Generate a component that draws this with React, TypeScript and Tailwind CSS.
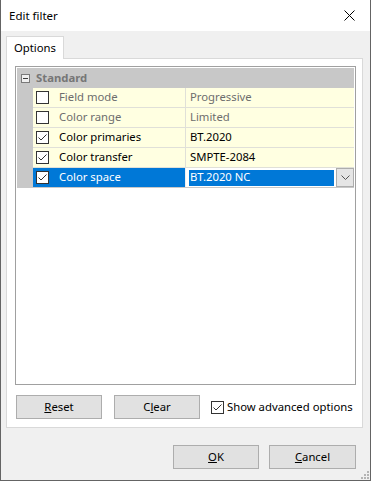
import React from "react";

const font = { fontFamily: '"Segoe UI", "Noto Sans", sans-serif' };

function Check({ checked }: { checked: boolean }) {
  return (
    <div className="w-[13px] h-[13px] border border-[#333333] bg-white flex items-center justify-center shrink-0">
      {checked && (
        <svg width="11" height="11" viewBox="0 0 11 11">
          <path d="M1.5 5.5 L4 8 L9.5 2.5" fill="none" stroke="#333333" strokeWidth="1" />
        </svg>
      )}
    </div>
  );
}

type Row = { name: string; value: string; checked: boolean; disabled?: boolean };

const rows: Row[] = [
  { name: "Field mode", value: "Progressive", checked: false, disabled: true },
  { name: "Color range", value: "Limited", checked: false, disabled: true },
  { name: "Color primaries", value: "BT.2020", checked: true },
  { name: "Color transfer", value: "SMPTE-2084", checked: true },
];

function Btn({ children, w }: { children: React.ReactNode; w: string }) {
  return (
    <div className={`${w} shrink-0 h-[24px] bg-[#e1e1e1] border border-[#adadad] flex items-center justify-center text-black`}>
      {children}
    </div>
  );
}

export default function App() {
  return (
    <div
      className="w-[371px] h-[481px] bg-[#f0f0f0] border-l border-r border-b border-[#646464] flex flex-col relative overflow-hidden text-[11.3px] text-black"
      style={font}
    >
      {/* title bar */}
      <div className="h-[31px] bg-white flex items-center justify-between pl-[8px] pr-[10px] shrink-0">
        <span className="text-[11.5px] text-black">Edit filter</span>
        <svg width="11" height="11" viewBox="0 0 11 11" className="mr-[5px]">
          <path d="M0.5 0.5 L10.5 10.5 M10.5 0.5 L0.5 10.5" stroke="#000" strokeWidth="1" />
        </svg>
      </div>

      {/* tabs */}
      <div className="pl-[5px] pr-[7px] pt-[5px] flex flex-col">
        <div className="flex">
          <div className="h-[23px] w-[58px] bg-white border border-b-0 border-[#d9d9d9] flex items-center pl-[7px] relative z-10 -mb-px">
            <span>Options</span>
          </div>
        </div>
        <div className="h-[370px] bg-white border border-[#d9d9d9] pt-[7px] pl-[8px] pr-[6px] pb-[8px] flex flex-col">
          {/* property grid */}
          <div className="h-[320px] border border-[#a0a0a0] p-px flex flex-col">
            <div className="h-[20px] bg-[#c8c8c8] flex items-center">
              <div className="w-[16px] flex items-center justify-center">
                <svg width="9" height="9" viewBox="0 0 9 9">
                  <rect x="0.5" y="0.5" width="8" height="8" fill="#f0f0f0" stroke="#7a7a7a" />
                  <path d="M2 4.5 H7" stroke="#3c3c3c" />
                </svg>
              </div>
              <span className="ml-[3px] font-bold text-[#767676]">Standard</span>
            </div>
            {rows.map((r) => (
              <div key={r.name} className="h-[20px] flex">
                <div className="w-[16px] bg-[#c8c8c8]" />
                <div className="w-[152px] bg-[#ffffe1] border-b border-[#e0e0d8] flex items-center pl-[3px]">
                  <Check checked={r.checked} />
                  <span className={`ml-[10px] ${r.disabled ? "text-[#6d6d6d]" : "text-black"}`}>{r.name}</span>
                </div>
                <div className="w-px bg-[#e0e0d8]" />
                <div className={`flex-1 bg-[#ffffe1] border-b border-[#e0e0d8] flex items-center pl-[4px] ${r.disabled ? "text-[#6d6d6d]" : "text-black"}`}>
                  {r.value}
                </div>
              </div>
            ))}
            <div className="h-[20px] flex border-b border-[#c8c8c8]">
              <div className="w-[16px] bg-[#c8c8c8]" />
              <div className="w-[152px] bg-[#0078d7] flex items-center pl-[3px]">
                <Check checked />
                <span className="ml-[10px] text-white">Color space</span>
              </div>
              <div className="w-px bg-[#f0f0f0]" />
              <div className="flex-1 bg-white flex items-center pl-[3px]">
                <div className="w-[145px] h-[16px] bg-[#0078d7] text-white flex items-center pl-px">BT.2020 NC</div>
                <div className="ml-[2px] w-[18px] h-[19px] bg-[#e5e5e5] border border-[#adadad] flex items-center justify-center self-start">
                  <svg width="9" height="5" viewBox="0 0 9 5">
                    <path d="M0.5 0.5 L4.5 4.5 L8.5 0.5" fill="none" stroke="#555" strokeWidth="1" />
                  </svg>
                </div>
              </div>
            </div>
            <div className="flex-1 bg-white" />
          </div>
          {/* buttons row */}
          <div className="mt-[10px] ml-px flex items-center">
            <Btn w="w-[86px]"><span><u>R</u>eset</span></Btn>
            <div className="ml-[12px] shrink-0">
              <Btn w="w-[86px]"><span>C<u>l</u>ear</span></Btn>
            </div>
            <div className="ml-[11px] flex items-center whitespace-nowrap">
              <Check checked />
              <span className="ml-[3px]">Show advanced options</span>
            </div>
          </div>
        </div>
      </div>

      {/* dialog buttons */}
      <div className="flex justify-end pr-[14px] mt-[17px]">
        <Btn w="w-[86px]"><span><u>O</u>K</span></Btn>
        <div className="ml-[10px]">
          <Btn w="w-[87px]"><span><u>C</u>ancel</span></Btn>
        </div>
      </div>

      {/* size grip */}
      <svg width="9" height="9" viewBox="0 0 9 9" className="absolute right-[1px] bottom-[1px]">
        {[
          [7, 1],
          [4, 4],
          [7, 4],
          [1, 7],
          [4, 7],
          [7, 7],
        ].map(([x, y], i) => (
          <rect key={i} x={x} y={y} width="2" height="2" fill="#b4b4b4" />
        ))}
      </svg>
    </div>
  );
}
